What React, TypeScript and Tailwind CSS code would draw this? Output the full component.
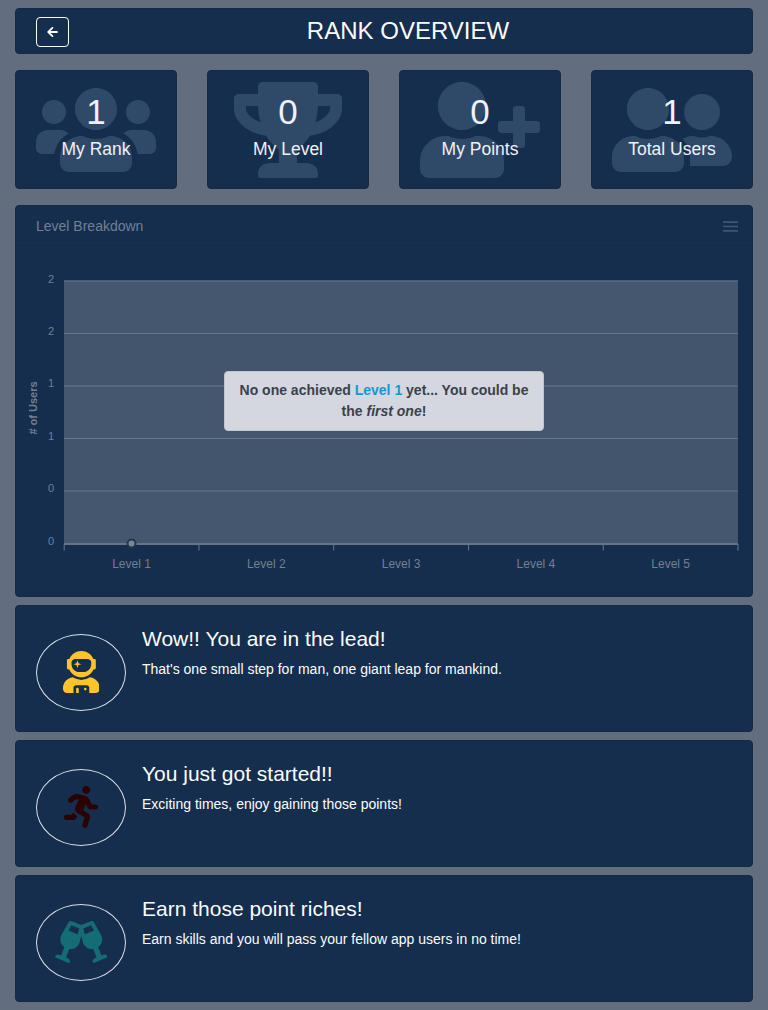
import React from 'react';
import {
  FaArrowLeft,
  FaGlassCheers,
  FaRunning,
  FaTrophy,
  FaUserAstronaut,
  FaUserFriends,
  FaUserPlus,
  FaUsers,
} from 'react-icons/fa';

const card = 'rounded-[4px] border border-[#142944] bg-[#152e4d]';

const stats = [
  { label: 'My Rank', value: 1, icon: <FaUsers className="h-24 w-[120px]" /> },
  { label: 'My Level', value: 0, icon: <FaTrophy className="h-24 w-[108px]" /> },
  { label: 'My Points', value: 0, icon: <FaUserPlus className="h-24 w-[120px]" /> },
  { label: 'Total Users', value: 1, icon: <FaUserFriends className="h-24 w-[120px]" /> },
];

const messages = [
  {
    title: 'Wow!! You are in the lead!',
    text: "That's one small step for man, one giant leap for mankind.",
    icon: <FaUserAstronaut className="h-[42px] w-[36.75px] text-[#ffc42b]" />,
  },
  {
    title: 'You just got started!!',
    text: 'Exciting times, enjoy gaining those points!',
    icon: <FaRunning className="h-[42px] w-[34px] text-[#2b0202]" />,
  },
  {
    title: 'Earn those point riches!',
    text: 'Earn skills and you will pass your fellow app users in no time!',
    icon: <FaGlassCheers className="h-[42px] w-[52.5px] text-[#146c75]" />,
  },
];

const bands = [281, 333.5, 386, 438.5, 491];
const yLabels = ['2', '2', '1', '1', '0', '0'];
const labelBaselines = [283, 335, 387, 440, 492, 545];
const ticks = [0, 1, 2, 3, 4, 5];

function Chart() {
  return (
    <svg width="736" height="350" viewBox="16 246 736 350" className="block font-['Liberation_Sans',sans-serif]">
      {bands.map((y, i) => (
        <rect key={y} x="64" y={y - 0.5} width="674" height="53" fill={i % 2 ? '#42556d' : '#44576f'} />
      ))}
      {bands.map((y) => (
        <line key={y} x1="64" x2="738" y1={y} y2={y} stroke="#68768b" strokeWidth="1" />
      ))}
      <line x1="64" x2="738" y1="544" y2="544" stroke="#667488" strokeWidth="2" />
      {ticks.map((i) => (
        <line key={i} x1={64.2 + i * 134.76} x2={64.2 + i * 134.76} y1="544" y2="550.5" stroke="#6b788b" />
      ))}
      {yLabels.map((t, i) => (
        <text key={i} x="54" y={labelBaselines[i]} textAnchor="end" fontSize="11" fill="#747f92">
          {t}
        </text>
      ))}
      {ticks.slice(1).map((i) => (
        <text key={i} x={131.5 + (i - 1) * 134.8} y="568" textAnchor="middle" fontSize="12" fill="#747f92">
          {`Level ${i}`}
        </text>
      ))}
      <text transform="translate(37 408) rotate(-90)" textAnchor="middle" fontSize="11" fontWeight="700" fill="#747f92">
        # of Users
      </text>
      <circle cx="131.5" cy="543.5" r="4" fill="#7c8796" stroke="#25364b" strokeWidth="2" />
    </svg>
  );
}

export default function App() {
  return (
    <div className="flex h-[1010px] flex-col bg-[#626d7d] px-[15px] pt-2 font-['Liberation_Sans',Arial,sans-serif] text-[#fbfcfe]">
      <header className={`${card} flex h-[46px] shrink-0 items-center px-5`}>
        <button className="mt-0.5 flex h-[30px] w-[33px] items-center justify-center rounded-[4px] border border-white">
          <FaArrowLeft className="h-3 w-[11px]" />
        </button>
        <h1 className="grow pr-[7px] pl-[22px] text-center text-2xl">RANK OVERVIEW</h1>
      </header>

      <section className="mt-4 grid shrink-0 grid-cols-4 gap-[30px]">
        {stats.map((s) => (
          <div key={s.label} className={`${card} grid h-[119px] place-items-center`}>
            <div className="col-start-1 row-start-1 text-[#2f4a69]">{s.icon}</div>
            <div className="z-10 col-start-1 row-start-1 pb-[7px] text-center text-[#eff1f9]">
              <div className="text-[35px] leading-[42px]">{s.value}</div>
              <div className="pt-[3px] text-[17.5px] leading-[26px]">{s.label}</div>
            </div>
          </div>
        ))}
      </section>

      <section className={`${card} relative mt-4 h-[392px] shrink-0`}>
        <div className="flex h-10 items-center justify-between border-b border-[#142b48] pt-px pr-[13px] pl-5">
          <h2 className="pt-px text-[14px] text-[#747f92]">Level Breakdown</h2>
          <svg width="17" height="12" viewBox="0 0 17 12" className="mt-0.5">
            <path d="M1 1.2H16M1 5.5H16M1 9.8H16" stroke="#40566b" strokeWidth="1.7" />
          </svg>
        </div>
        <Chart />
        <div className="absolute top-[165px] left-[208px] h-[60px] w-[320px] rounded-[4px] border border-[#c0c6cf] bg-[#d4d7e0] pt-2 text-center text-[14px] leading-[21px] font-bold text-[#3a424b]">
          No one achieved <span className="text-[#1397d4]">Level 1</span> yet... You could be
          <br />
          the <i>first one</i>!
        </div>
      </section>

      {messages.map((m) => (
        <article key={m.title} className={`${card} mt-2 flex h-[127px] shrink-0 px-5`}>
          <div className="mt-7 flex h-[77px] w-[90px] items-center justify-center rounded-[50%] border border-[#d9dfe6] pb-[2px]">
            {m.icon}
          </div>
          <div className="ml-4 pt-5">
            <h3 className="text-[21px] leading-[25px]">{m.title}</h3>
            <p className="mt-2 text-[14px] leading-[21px]">{m.text}</p>
          </div>
        </article>
      ))}
    </div>
  );
}
